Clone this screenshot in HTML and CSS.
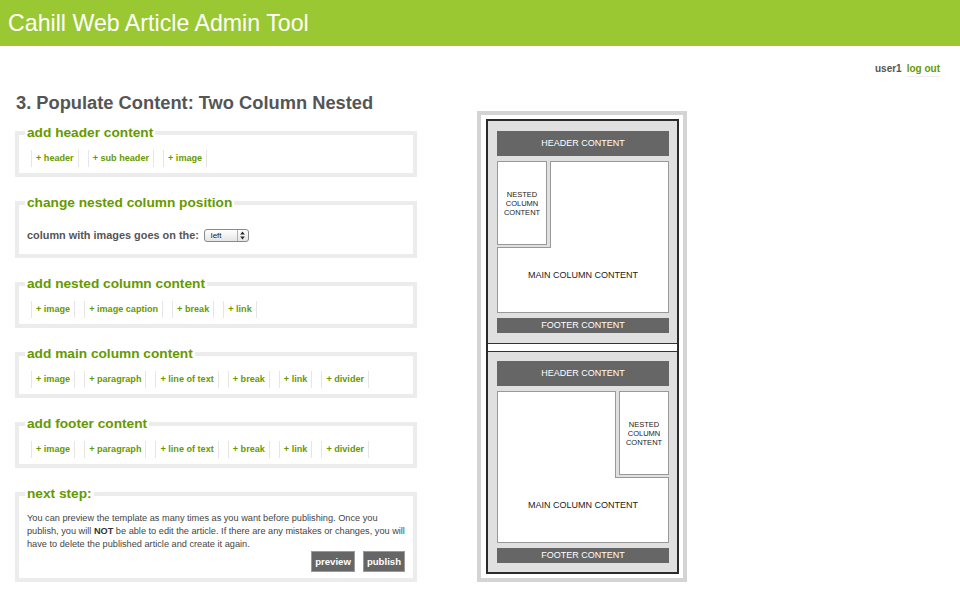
FILE: index.html
```html
<!DOCTYPE html>
<html lang="en">
<head>
<meta charset="utf-8">
<title>Cahill Web Article Admin Tool</title>
<link rel="stylesheet" href="styles.css">
</head>
<body>
<header class="topbar">
  <h1>Cahill Web Article Admin Tool</h1>
</header>
<div class="userbar">
  <span class="user">user1</span>
  <a class="logout" href="#">log out</a>
</div>
<main class="content">
  <section class="editor">
    <h2>3. Populate Content: Two Column Nested</h2>

    <fieldset class="group">
      <legend>add header content</legend>
      <div class="links">
        <a href="#">+ header</a>
        <a href="#">+ sub header</a>
        <a href="#">+ image</a>
      </div>
    </fieldset>

    <fieldset class="group">
      <legend>change nested column position</legend>
      <div class="position-row">
        <span class="position-label">column with images goes on the:</span>
        <span class="select">
          <span class="select-value">left</span>
          <span class="select-arrows">
            <svg width="5" height="9" viewBox="0 0 5 9"><path d="M2.5 0.5 L4.8 3.5 L0.2 3.5 Z" fill="#222"/><path d="M2.5 8.5 L4.8 5.5 L0.2 5.5 Z" fill="#222"/></svg>
          </span>
        </span>
      </div>
    </fieldset>

    <fieldset class="group">
      <legend>add nested column content</legend>
      <div class="links">
        <a href="#">+ image</a>
        <a href="#">+ image caption</a>
        <a href="#">+ break</a>
        <a href="#">+ link</a>
      </div>
    </fieldset>

    <fieldset class="group">
      <legend>add main column content</legend>
      <div class="links">
        <a href="#">+ image</a>
        <a href="#">+ paragraph</a>
        <a href="#">+ line of text</a>
        <a href="#">+ break</a>
        <a href="#">+ link</a>
        <a href="#">+ divider</a>
      </div>
    </fieldset>

    <fieldset class="group">
      <legend>add footer content</legend>
      <div class="links">
        <a href="#">+ image</a>
        <a href="#">+ paragraph</a>
        <a href="#">+ line of text</a>
        <a href="#">+ break</a>
        <a href="#">+ link</a>
        <a href="#">+ divider</a>
      </div>
    </fieldset>

    <fieldset class="group group-last">
      <legend>next step:</legend>
      <p class="note">You can preview the template as many times as you want before publishing. Once you<br>publish, you will <strong>NOT</strong> be able to edit the article. If there are any mistakes or changes, you will<br>have to delete the published article and create it again.</p>
      <div class="actions">
        <button type="button" class="btn">preview</button>
        <button type="button" class="btn">publish</button>
      </div>
    </fieldset>
  </section>

  <aside class="preview">
    <div class="frame">
      <div class="panel panel-top">
        <div class="bar bar-header">HEADER CONTENT</div>
        <div class="columns columns-left">
          <div class="main-col"></div>
          <div class="nested-wrap"><div class="nested">NESTED<br>COLUMN<br>CONTENT</div></div>
          <div class="main-label">MAIN COLUMN CONTENT</div>
        </div>
        <div class="bar bar-footer">FOOTER CONTENT</div>
      </div>
      <div class="panel panel-bottom">
        <div class="bar bar-header">HEADER CONTENT</div>
        <div class="columns columns-right">
          <div class="main-col"></div>
          <div class="nested-wrap"><div class="nested">NESTED<br>COLUMN<br>CONTENT</div></div>
          <div class="main-label">MAIN COLUMN CONTENT</div>
        </div>
        <div class="bar bar-footer">FOOTER CONTENT</div>
      </div>
    </div>
  </aside>
</main>
</body>
</html>
```

FILE: styles.css
```css
* {
  box-sizing: border-box;
}

body {
  margin: 0;
  background: #fff;
  color: #555;
  font-family: "Liberation Sans", Arial, Helvetica, sans-serif;
}

.topbar {
  height: 46px;
  padding: 0 8px;
  background: #9ac832;
}

.topbar h1 {
  margin: 0;
  font-size: 23.2px;
  line-height: 46px;
  font-weight: normal;
  color: #fff;
}

.userbar {
  display: flex;
  justify-content: flex-end;
  gap: 5px;
  padding: 16px 20px 0;
  font-size: 10px;
  font-weight: bold;
  line-height: 14px;
}

.user {
  color: #555;
}

.logout {
  color: #669900;
  text-decoration: none;
  border-bottom: 1px solid #eee;
}

.content {
  display: flex;
  align-items: flex-start;
  padding-left: 15px;
}

.editor {
  width: 402px;
}

.editor h2 {
  margin: 15px 0 11px 1px;
  font-size: 18.3px;
  line-height: 22px;
  color: #555;
}

.group {
  margin: 0 0 18px;
  padding: 9px 6px 6px;
  border: 4px solid #ececec;
  min-width: 0;
}

.group legend {
  padding: 0 2px;
  font-size: 13.7px;
  line-height: 16px;
  font-weight: bold;
  color: #669900;
}

.links {
  display: flex;
  gap: 9px;
  margin-left: 6px;
}

.links a {
  display: block;
  padding: 0 4px;
  border-left: 1px solid #e6e6e6;
  border-right: 1px solid #e6e6e6;
  font-size: 9.1px;
  line-height: 17px;
  font-weight: bold;
  color: #669900;
  text-decoration: none;
}

.position-row {
  display: flex;
  align-items: center;
  gap: 5px;
  margin: 9px 0 6px 2px;
  line-height: 13px;
}

.position-label {
  font-size: 10.9px;
  font-weight: bold;
  color: #555;
}

.select {
  display: inline-flex;
  width: 45px;
  height: 13px;
  border: 1px solid #8a8a8a;
  border-radius: 3px;
  background: linear-gradient(#ffffff, #e4e4e4);
  font-size: 8px;
  line-height: 11px;
  color: #222;
}

.select-value {
  flex: 1;
  padding-left: 6px;
}

.select-arrows {
  width: 11px;
  border-left: 1px solid #b0b0b0;
  display: flex;
  align-items: center;
  justify-content: center;
}

.note {
  margin: 1px 0 0 2px;
  font-size: 9.2px;
  line-height: 13px;
  color: #444;
}

.note strong {
  color: #333;
}

.actions {
  display: flex;
  justify-content: flex-end;
  gap: 8px;
  margin-right: 2px;
}

.btn {
  height: 21px;
  padding: 0 3px;
  border: 1px solid #9a9a9a;
  background: #666;
  color: #fff;
  font-family: inherit;
  font-size: 9.6px;
  font-weight: bold;
}

.preview {
  width: 210px;
  margin: 34px 0 0 60px;
  padding: 4px 4px 4px 5px;
  border: 4px solid #d4d4d4;
  background: #fff;
}

.frame {
  display: flex;
  flex-direction: column;
  gap: 7px;
  border: 2px solid #2a2a2a;
  background: #fff;
}

.panel {
  display: flex;
  flex-direction: column;
  gap: 5px;
  padding: 10px 8px 10px 9px;
  background: #e0e0e0;
}

.panel-top {
  border-bottom: 1px solid #333;
}

.panel-bottom {
  border-top: 1px solid #333;
  padding: 9px 8px 9px 9px;
}

.bar {
  background: #666;
  color: #fff;
  font-size: 9px;
  text-align: center;
}

.bar-header {
  height: 25px;
  line-height: 25px;
}

.bar-footer {
  height: 15px;
  line-height: 15px;
}

.columns {
  display: grid;
  height: 152px;
  grid-template-rows: 87px 1fr;
}

.columns-left {
  grid-template-columns: 54px 1fr;
}

.columns-right {
  grid-template-columns: 1fr 54px;
}

.main-col {
  grid-row: 1 / 3;
  grid-column: 1 / 3;
  background: #fff;
  border: 1px solid #999;
}

.main-label {
  grid-row: 2;
  grid-column: 1 / 3;
  align-self: center;
  justify-self: center;
  padding-bottom: 12px;
  font-size: 9px;
  color: #222;
}

.nested-wrap {
  grid-row: 1;
  display: flex;
  background: #e0e0e0;
  border-bottom: 1px solid #999;
}

.columns-left .nested-wrap {
  grid-column: 1;
  border-right: 1px solid #999;
  padding: 0 3px 2px 0;
}

.columns-right .nested-wrap {
  grid-column: 2;
  border-left: 1px solid #999;
  padding: 0 0 2px 3px;
}

.nested {
  flex: 1;
  display: flex;
  align-items: center;
  justify-content: center;
  text-align: center;
  background: #fff;
  border: 1px solid #999;
  font-size: 7.5px;
  line-height: 9px;
  color: #222;
}
```
